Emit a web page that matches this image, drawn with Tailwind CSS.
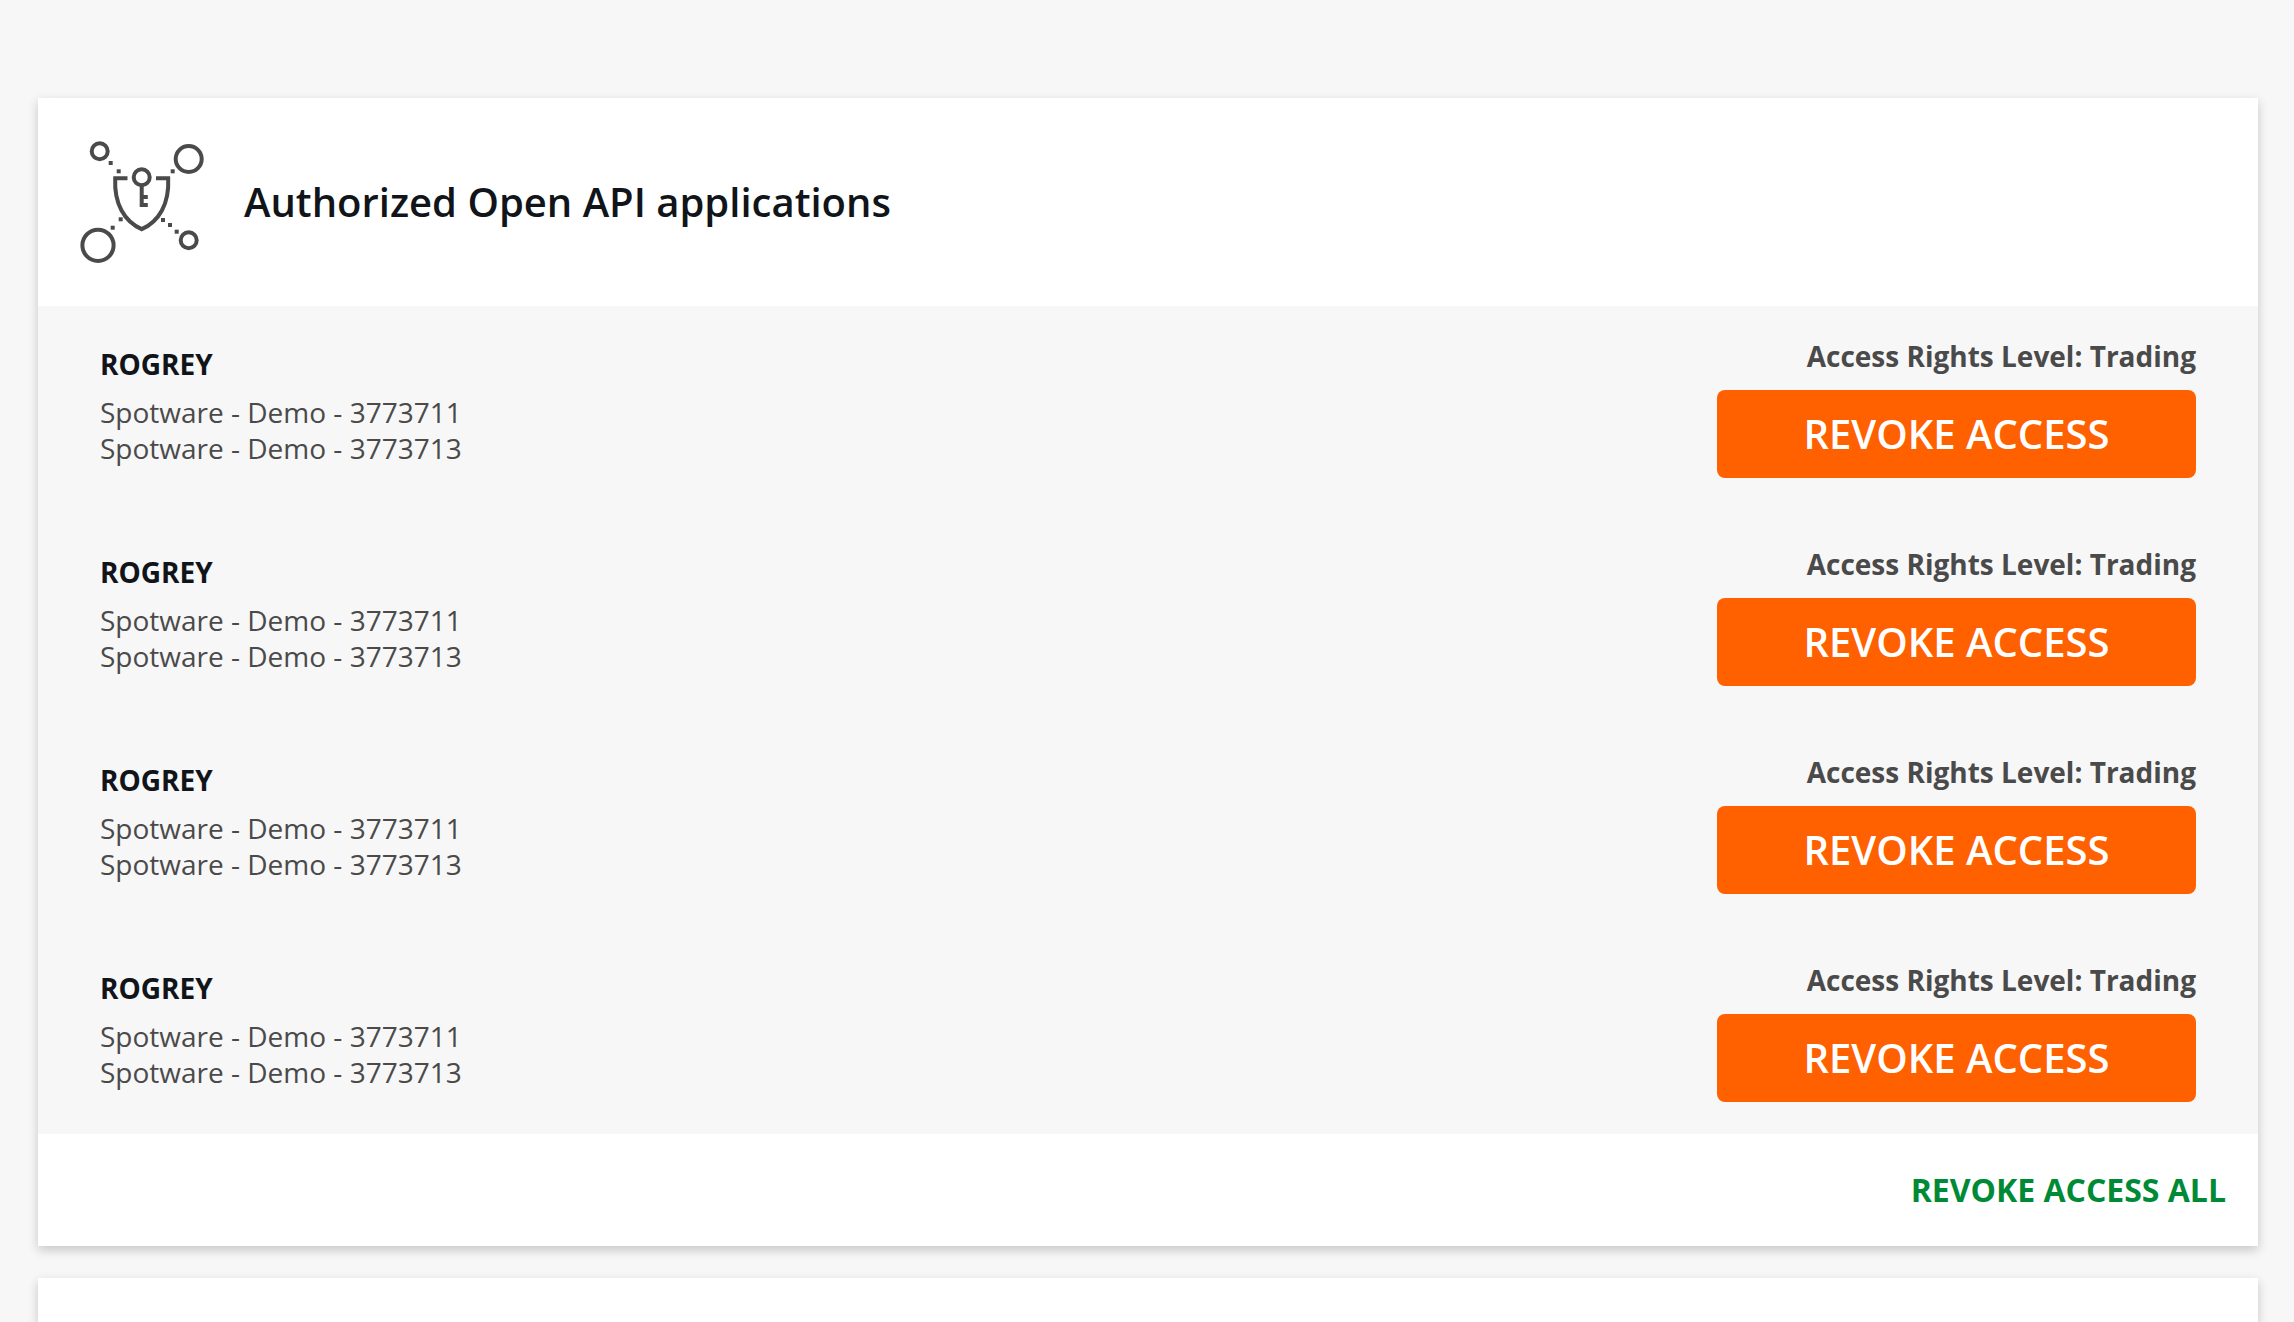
<!DOCTYPE html>
<html lang="en">
  <head>
    <meta charset="UTF-8">
    <meta name="viewport" content="width=device-width, initial-scale=1">
    <title>Authorized Open API applications</title>
    <script src="https://cdn.jsdelivr.net/npm/@tailwindcss/browser@4"></script>
  </head>
  <body class="bg-[#f7f7f7] font-['Open_Sans',sans-serif] text-[28px] leading-9 text-[#4a4a4a]">
    <main class="flex min-h-screen flex-col gap-8 pt-[98px] pl-[38px] pr-9">
      <section class="bg-white shadow-[0_4px_10px_rgba(0,0,0,0.2)]">
        <header class="flex items-center gap-[38px] px-10 py-10">
          <svg class="size-32 shrink-0" viewBox="0 0 128 128" fill="none" stroke="#4a4a4a" stroke-width="4" aria-hidden="true">
            <!-- nodes -->
            <circle cx="21.7" cy="13.3" r="8" />
            <circle cx="110.7" cy="21" r="13" />
            <circle cx="110.7" cy="102.3" r="8" />
            <circle cx="20" cy="107.3" r="15.6" />
            <!-- shield -->
            <path d="M49.5 40.3H37.2C36 66 46.5 83.5 63.7 91.2C81 83.5 91.4 66 90.2 40.3H78" />
            <!-- key -->
            <circle cx="63.7" cy="39.2" r="8" />
            <path d="M63.7 47V69M63.7 59H69.8M63.7 67H69.8" />
            <!-- dotted links -->
            <g fill="#4a4a4a" stroke="none">
              <rect x="30.7" y="23" width="4" height="4" />
              <rect x="38.7" y="31.3" width="4" height="4" />
              <rect x="92.7" y="31.3" width="4" height="4" />
              <rect x="40.7" y="79.3" width="4" height="4" />
              <rect x="32.7" y="87.7" width="4" height="4" />
              <rect x="83" y="80" width="4" height="4" />
              <rect x="90" y="85" width="4" height="4" />
              <rect x="96.7" y="91.7" width="4" height="4" />
            </g>
          </svg>
          <h1 class="text-[40px] leading-[56px] font-semibold text-[#11151a]">Authorized Open API applications</h1>
        </header>

        <ul class="flex flex-col gap-[68px] bg-[#f7f7f7] px-[62px] py-8">
          <li class="flex justify-between">
            <div class="pt-2">
              <h2 class="mb-3 font-bold text-[#11151a]">ROGREY</h2>
              <p>Spotware - Demo - 3773711</p>
              <p>Spotware - Demo - 3773713</p>
            </div>
            <div class="flex w-[479px] flex-col gap-4">
              <p class="text-right font-bold">Access Rights Level: Trading</p>
              <button type="button" class="h-[88px] rounded-lg bg-[#ff6000] text-[40px] font-semibold text-white">REVOKE ACCESS</button>
            </div>
          </li>
          <li class="flex justify-between">
            <div class="pt-2">
              <h2 class="mb-3 font-bold text-[#11151a]">ROGREY</h2>
              <p>Spotware - Demo - 3773711</p>
              <p>Spotware - Demo - 3773713</p>
            </div>
            <div class="flex w-[479px] flex-col gap-4">
              <p class="text-right font-bold">Access Rights Level: Trading</p>
              <button type="button" class="h-[88px] rounded-lg bg-[#ff6000] text-[40px] font-semibold text-white">REVOKE ACCESS</button>
            </div>
          </li>
          <li class="flex justify-between">
            <div class="pt-2">
              <h2 class="mb-3 font-bold text-[#11151a]">ROGREY</h2>
              <p>Spotware - Demo - 3773711</p>
              <p>Spotware - Demo - 3773713</p>
            </div>
            <div class="flex w-[479px] flex-col gap-4">
              <p class="text-right font-bold">Access Rights Level: Trading</p>
              <button type="button" class="h-[88px] rounded-lg bg-[#ff6000] text-[40px] font-semibold text-white">REVOKE ACCESS</button>
            </div>
          </li>
          <li class="flex justify-between">
            <div class="pt-2">
              <h2 class="mb-3 font-bold text-[#11151a]">ROGREY</h2>
              <p>Spotware - Demo - 3773711</p>
              <p>Spotware - Demo - 3773713</p>
            </div>
            <div class="flex w-[479px] flex-col gap-4">
              <p class="text-right font-bold">Access Rights Level: Trading</p>
              <button type="button" class="h-[88px] rounded-lg bg-[#ff6000] text-[40px] font-semibold text-white">REVOKE ACCESS</button>
            </div>
          </li>
        </ul>

        <footer class="flex justify-end px-8 py-9">
          <button type="button" class="text-[32px] leading-10 font-bold text-[#008a36]">REVOKE ACCESS ALL</button>
        </footer>
      </section>

      <section class="grow bg-white shadow-[0_4px_10px_rgba(0,0,0,0.2)]"></section>
    </main>
  </body>
</html>
